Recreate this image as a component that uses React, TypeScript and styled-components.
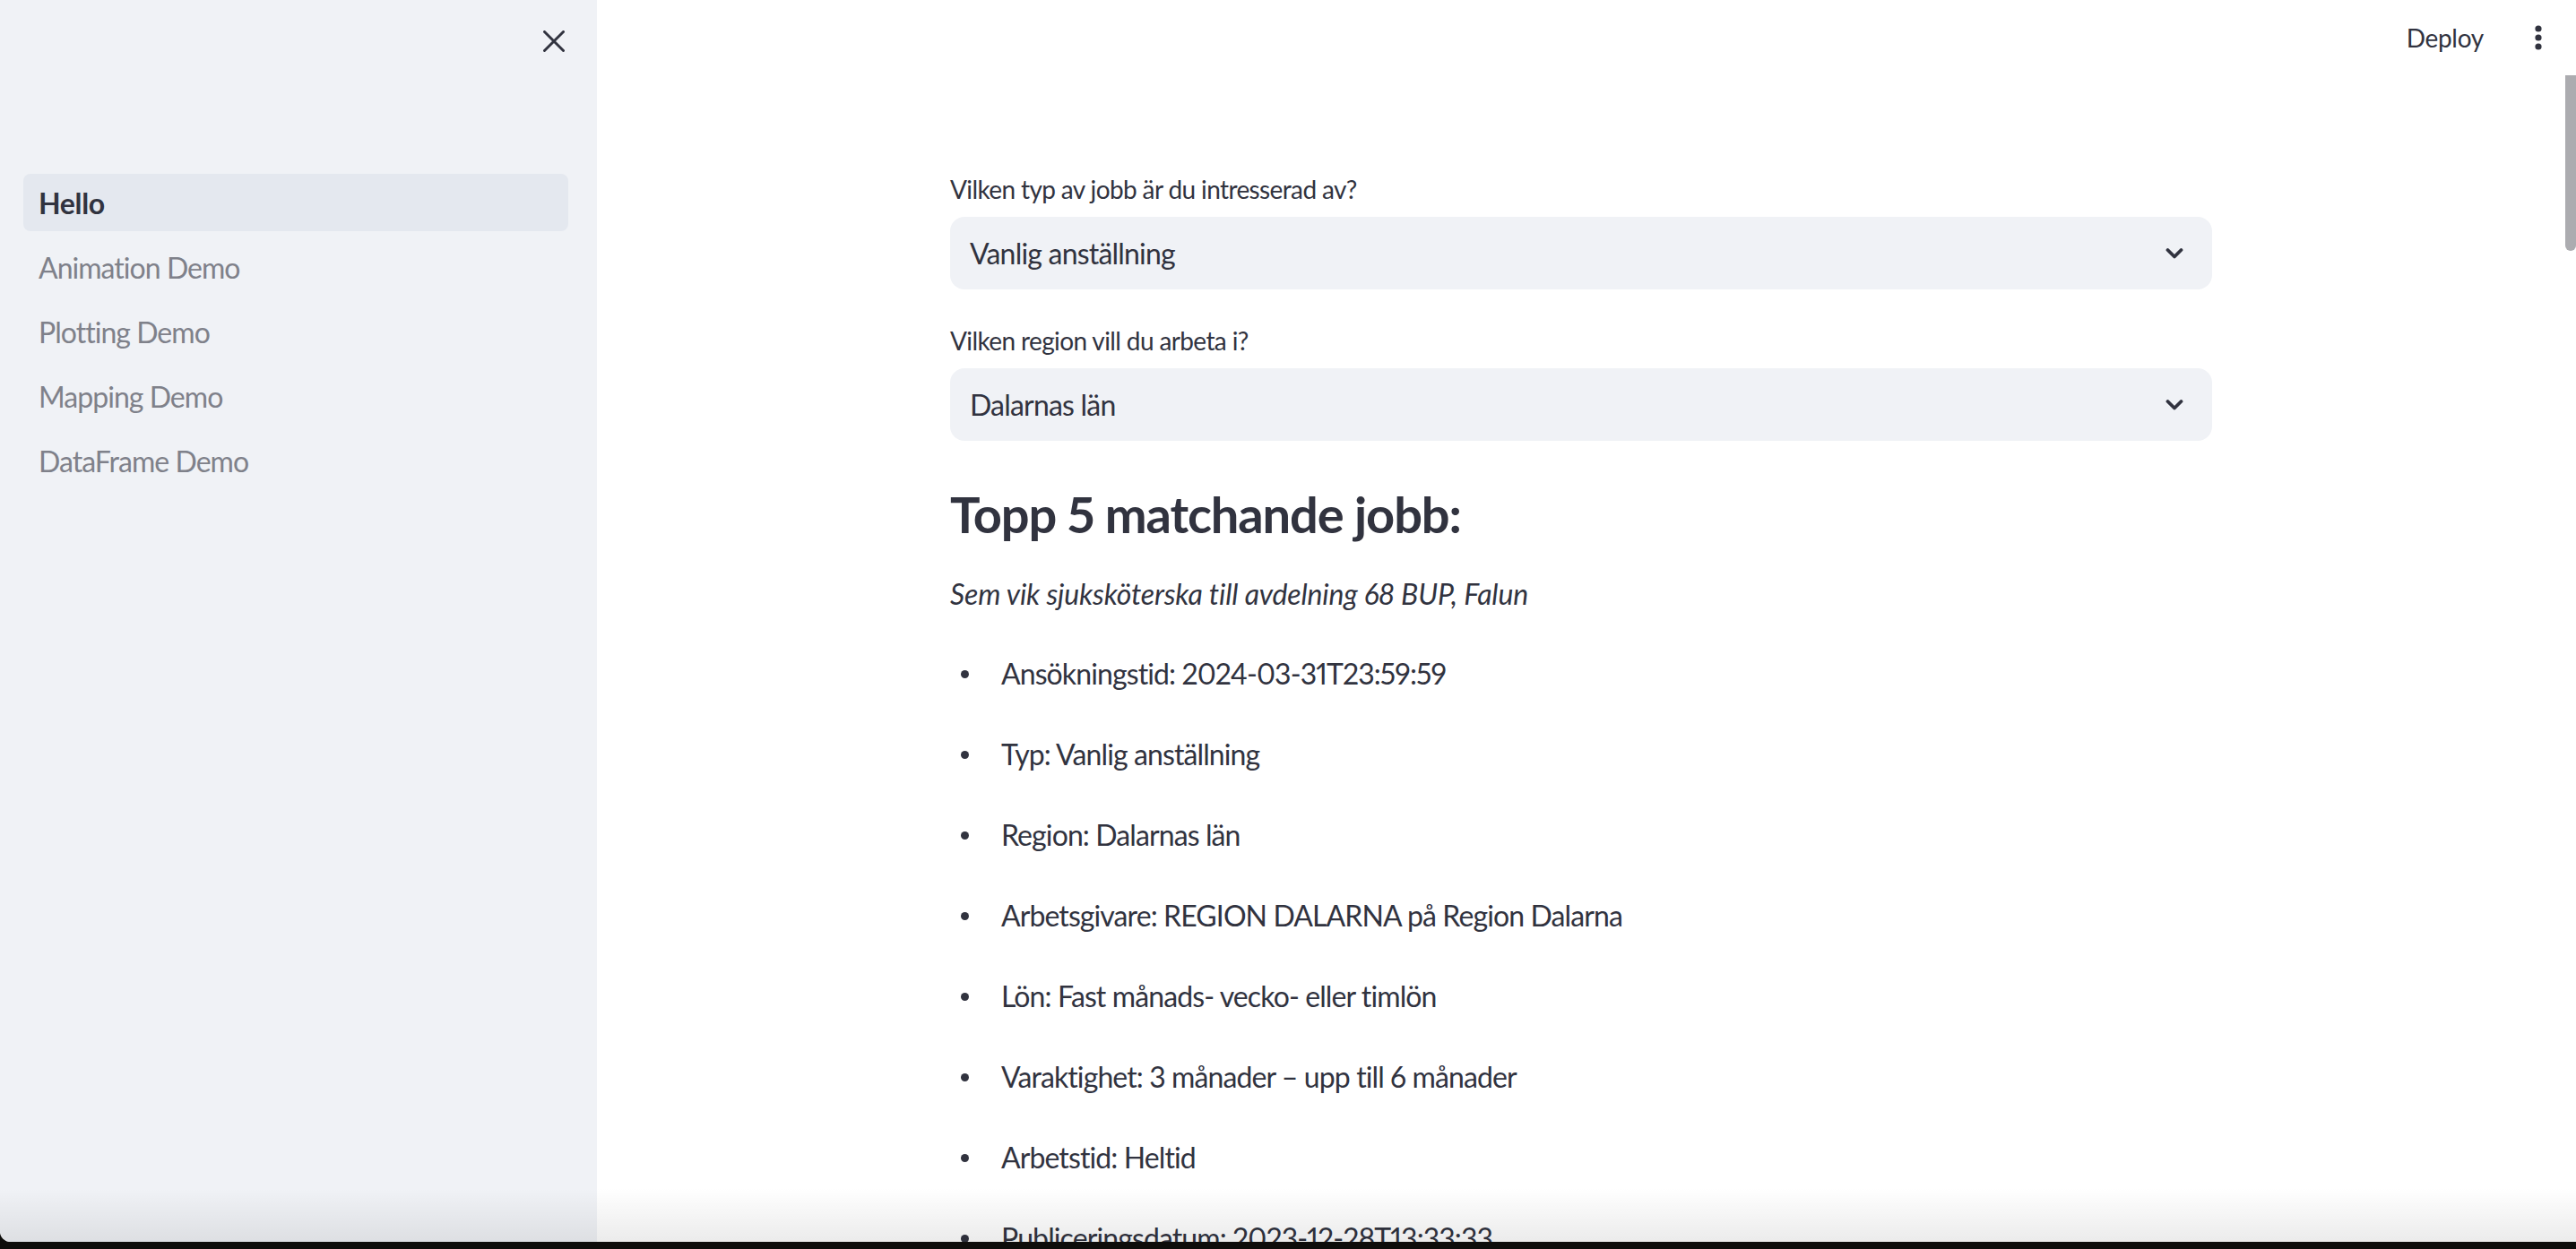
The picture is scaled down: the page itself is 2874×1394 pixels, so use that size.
import React from 'react';
import styled, { createGlobalStyle } from 'styled-components';

const GlobalStyle = createGlobalStyle`
    html, body {
        margin: 0;
        padding: 0;
        background: #0e0d0b;
    }
    * {
        box-sizing: border-box;
    }
`;

const FONT = `"Lato", "Noto Sans", "Liberation Sans", sans-serif`;
const TEXT = '#31333f';

const Window = styled.div`
    position: relative;
    display: flex;
    height: 1386px;
    overflow: hidden;
    border-bottom-left-radius: 12px;
    font-family: ${FONT};
    font-variant-numeric: proportional-nums;
    color: ${TEXT};
    background: #ffffff;
`;

const Sidebar = styled.aside`
    width: 666px;
    flex-shrink: 0;
    display: flex;
    flex-direction: column;
    background: #f0f2f6;
`;

const SidebarHeader = styled.div`
    height: 92px;
    flex-shrink: 0;
    display: flex;
    align-items: center;
    justify-content: flex-end;
    padding-right: 25px;
`;

const IconButton = styled.button`
    width: 46px;
    height: 46px;
    display: flex;
    align-items: center;
    justify-content: center;
    padding: 0;
    border: none;
    background: transparent;
    color: ${TEXT};
`;

const NavList = styled.nav`
    display: flex;
    flex-direction: column;
    gap: 8px;
    padding: 102px 32px 0 26px;
`;

const NavLink = styled.a<{ $active?: boolean }>`
    height: 64px;
    flex-shrink: 0;
    display: flex;
    align-items: center;
    padding: 0 17px;
    border-radius: 8px;
    font-size: 32px;
    letter-spacing: ${({ $active }) => ($active ? '-0.01em' : '-0.03em')};
    text-decoration: none;
    font-weight: ${({ $active }) => ($active ? 700 : 400)};
    color: ${({ $active }) => ($active ? TEXT : '#7f818a')};
    background: ${({ $active }) => ($active ? '#e4e8ef' : 'transparent')};
`;

const Main = styled.main`
    flex: 1;
    display: flex;
    min-width: 0;
`;

const ScrollArea = styled.div`
    flex: 1;
    display: flex;
    flex-direction: column;
    align-items: center;
    overflow: hidden;
`;

const Toolbar = styled.header`
    align-self: stretch;
    flex-shrink: 0;
    height: 84px;
    display: flex;
    align-items: center;
    justify-content: flex-end;
    gap: 22px;
    padding-right: 7px;
`;

const DeployButton = styled.button`
    padding: 0 16px;
    height: 48px;
    border: none;
    background: transparent;
    font-family: ${FONT};
    font-size: 28px;
    letter-spacing: -0.01em;
    color: ${TEXT};
`;

const ScrollTrack = styled.div`
    width: 12px;
    flex-shrink: 0;
    padding-top: 84px;
`;

const ScrollThumb = styled.div`
    height: 196px;
    background: #acacb0;
    border-radius: 0 0 6px 6px;
`;

const Block = styled.div`
    width: 1408px;
    flex-shrink: 0;
    display: flex;
    flex-direction: column;
    margin-top: 103px;
`;

const Field = styled.div`
    display: flex;
    flex-direction: column;
    & + & {
        margin-top: 33px;
    }
`;

const FieldLabel = styled.label`
    font-size: 28px;
    line-height: 48px;
    letter-spacing: -0.022em;
    margin-bottom: 7px;
`;

const SelectBox = styled.div`
    height: 81px;
    display: flex;
    align-items: center;
    justify-content: space-between;
    padding: 0 32px 0 22px;
    border-radius: 16px;
    background: #f0f2f6;
    font-size: 32px;
    letter-spacing: -0.025em;
`;

const Heading = styled.h3`
    margin: 46px 0 0;
    font-size: 56px;
    line-height: 72px;
    font-weight: 700;
    letter-spacing: -0.02em;
`;

const Subtitle = styled.p`
    margin: 27px 0 0;
    font-size: 32px;
    line-height: 52px;
    font-style: italic;
    letter-spacing: -0.005em;
`;

const DetailList = styled.ul`
    list-style: none;
    margin: 37px 0 0;
    padding: 0;
`;

const DetailItem = styled.li`
    display: flex;
    align-items: center;
    font-size: 32px;
    line-height: 52px;
    letter-spacing: -0.028em;
    margin-bottom: 38px;
`;

const Bullet = styled.span`
    width: 57px;
    flex-shrink: 0;
    display: flex;
    &::before {
        content: '';
        width: 9px;
        height: 9px;
        margin-left: 12px;
        border-radius: 50%;
        background: ${TEXT};
    }
`;

const BottomShade = styled.div`
    position: absolute;
    left: 0;
    right: 0;
    bottom: 0;
    height: 60px;
    pointer-events: none;
    background: linear-gradient(to bottom, rgba(0, 0, 0, 0), rgba(0, 0, 0, 0.08));
`;

const CloseIcon = () => (
    <svg width="24" height="24" viewBox="0 0 24 24">
        <path d="M1.5 1.5 L22.5 22.5 M22.5 1.5 L1.5 22.5" stroke={TEXT} strokeWidth="3" strokeLinecap="round" />
    </svg>
);

const Chevron = () => (
    <svg width="20" height="14" viewBox="0 0 20 14">
        <path d="M2.5 3 L10 10.5 L17.5 3" fill="none" stroke={TEXT} strokeWidth="3.8" strokeLinecap="round" strokeLinejoin="round" />
    </svg>
);

const Kebab = () => (
    <svg width="10" height="28" viewBox="0 0 10 28">
        <circle cx="5" cy="4" r="3.6" fill={TEXT} />
        <circle cx="5" cy="14" r="3.6" fill={TEXT} />
        <circle cx="5" cy="24" r="3.6" fill={TEXT} />
    </svg>
);

const pages = ['Hello', 'Animation Demo', 'Plotting Demo', 'Mapping Demo', 'DataFrame Demo'];

const details = [
    'Ansökningstid: 2024-03-31T23:59:59',
    'Typ: Vanlig anställning',
    'Region: Dalarnas län',
    'Arbetsgivare: REGION DALARNA på Region Dalarna',
    'Lön: Fast månads- vecko- eller timlön',
    'Varaktighet: 3 månader – upp till 6 månader',
    'Arbetstid: Heltid',
    'Publiceringsdatum: 2023-12-28T13:33:33',
];

export default function App() {
    return (
        <>
            <GlobalStyle />
            <Window>
                <Sidebar>
                    <SidebarHeader>
                        <IconButton aria-label="Close sidebar">
                            <CloseIcon />
                        </IconButton>
                    </SidebarHeader>
                    <NavList>
                        {pages.map((p, i) => (
                            <NavLink key={p} $active={i === 0}>
                                {p}
                            </NavLink>
                        ))}
                    </NavList>
                </Sidebar>
                <Main>
                    <ScrollArea>
                        <Toolbar>
                            <DeployButton>Deploy</DeployButton>
                            <IconButton aria-label="Main menu">
                                <Kebab />
                            </IconButton>
                        </Toolbar>
                        <Block>
                            <Field>
                                <FieldLabel>Vilken typ av jobb är du intresserad av?</FieldLabel>
                                <SelectBox>
                                    <span>Vanlig anställning</span>
                                    <Chevron />
                                </SelectBox>
                            </Field>
                            <Field>
                                <FieldLabel>Vilken region vill du arbeta i?</FieldLabel>
                                <SelectBox>
                                    <span>Dalarnas län</span>
                                    <Chevron />
                                </SelectBox>
                            </Field>
                            <Heading>Topp 5 matchande jobb:</Heading>
                            <Subtitle>Sem vik sjuksköterska till avdelning 68 BUP, Falun</Subtitle>
                            <DetailList>
                                {details.map((d) => (
                                    <DetailItem key={d}>
                                        <Bullet />
                                        {d}
                                    </DetailItem>
                                ))}
                            </DetailList>
                        </Block>
                    </ScrollArea>
                    <ScrollTrack>
                        <ScrollThumb />
                    </ScrollTrack>
                </Main>
                <BottomShade />
            </Window>
        </>
    );
}
